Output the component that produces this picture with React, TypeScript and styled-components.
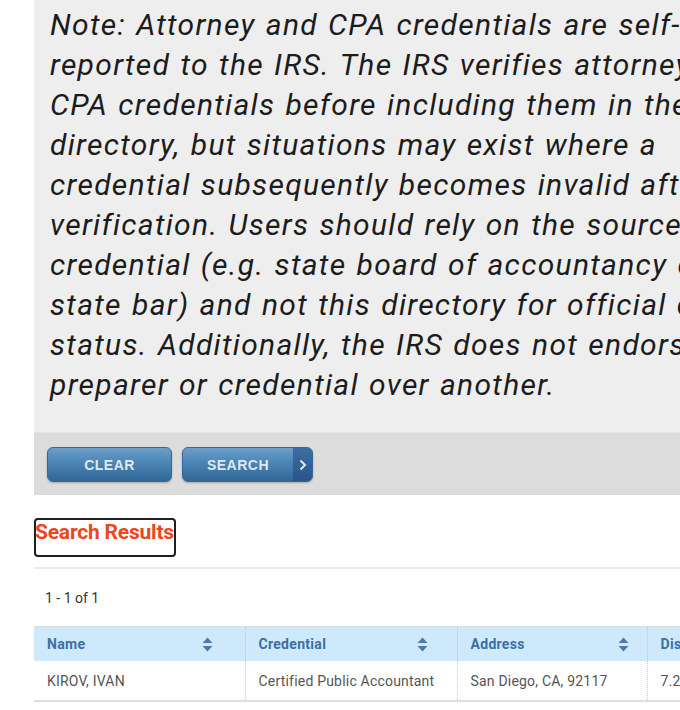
import React from 'react';
import styled, { createGlobalStyle } from 'styled-components';

const GlobalStyle = createGlobalStyle`
  html, body {
    margin: 0;
    padding: 0;
    overflow: hidden;
    background: #fff;
  }
  body {
    font-family: Roboto, "Liberation Sans", Arial, sans-serif;
  }
`;

const Page = styled.div`
  width: 1100px;
  padding-left: 34px;
`;

const NotePanel = styled.div`
  background: #eeeeee;
  padding: 5px 0 27px 16px;
`;

const NoteText = styled.p`
  margin: 0;
  white-space: nowrap;
  font-family: Roboto, "Liberation Sans", Arial, sans-serif;
  font-style: italic;
  font-size: 30px;
  line-height: 40px;
  letter-spacing: 1.3px;
  word-spacing: 1.5px;
  color: #1c1c1c;
`;

const ButtonBar = styled.div`
  background: #dcdcdc;
  display: flex;
  gap: 10px;
  padding: 14px 13px 13px;
  border-top: 1px solid #e4e4e4;
`;

const ActionButton = styled.button<{ $width: number }>`
  display: flex;
  align-items: stretch;
  width: ${(p) => p.$width}px;
  height: 35px;
  padding: 0;
  border: 1px solid #35679a;
  border-radius: 6px;
  overflow: hidden;
  background: linear-gradient(to bottom, #6c9fca 0%, #4c84b5 45%, #2f6799 100%);
  box-shadow: 0 1px 2px rgba(0, 0, 0, 0.25);
  cursor: pointer;
`;

const ButtonLabel = styled.span`
  flex: 1;
  display: flex;
  align-items: center;
  justify-content: center;
  font-family: "Liberation Sans", Arial, sans-serif;
  font-weight: bold;
  font-size: 14px;
  color: #dfe8f1;
  letter-spacing: 0.5px;
`;

const Chevron = styled.span`
  width: 19px;
  display: flex;
  align-items: center;
  justify-content: center;
  background: linear-gradient(to bottom, #3c6fa3 0%, #27558a 100%);
  color: #dfe8f1;
`;

const Results = styled.section`
  padding-top: 23px;
`;

const ResultsHeading = styled.h2`
  box-sizing: border-box;
  margin: 0;
  width: 142px;
  height: 39px;
  border: 2px solid #1f1f1f;
  border-radius: 4px;
  font-family: Roboto, "Liberation Sans", Arial, sans-serif;
  font-weight: bold;
  font-size: 21px;
  line-height: 24px;
  color: #e9481f;
  white-space: nowrap;
  text-indent: -1px;
  letter-spacing: -0.2px;
`;

const Divider = styled.div`
  margin-top: 10px;
  height: 2px;
  background: #ebebeb;
`;

const Count = styled.div`
  padding: 20px 0 0 11px;
  height: 37px;
  font-size: 14px;
  line-height: 18px;
  color: #333;
`;

const Table = styled.table`
  border-collapse: collapse;
  table-layout: fixed;
  width: 800px;
  font-family: Roboto, "Liberation Sans", Arial, sans-serif;
  font-size: 14px;
`;

const HeadCell = styled.th`
  background: #cde9fb;
  height: 34px;
  padding: 0 13px;
  text-align: left;
  font-weight: bold;
  letter-spacing: 0.3px;
  color: #3b6fa6;
  border-top: 1px solid #dcdcdc;
  border-left: 1px dotted #b9c9d6;
  &:first-child {
    border-left: none;
  }
`;

const HeadInner = styled.div<{ $iconGap: number }>`
  display: flex;
  align-items: center;
  justify-content: space-between;
  padding-right: ${(p) => p.$iconGap}px;
`;

const BodyCell = styled.td`
  height: 39px;
  padding: 0 13px;
  color: #555;
  letter-spacing: 0.2px;
  border-bottom: 2px solid #dedede;
  border-left: 1px dotted #c8c8c8;
  white-space: nowrap;
  overflow: hidden;
  &:first-child {
    border-left: none;
  }
`;

const SortIcon = () => (
  <svg width="11" height="15" viewBox="0 0 11 15" aria-hidden="true">
    <path d="M5.5 0.5 L10.5 6 L0.5 6 Z" fill="#4f7aa8" />
    <path d="M5.5 14.5 L10.5 9 L0.5 9 Z" fill="#4f7aa8" />
  </svg>
);

const noteLines = [
  'Note: Attorney and CPA credentials are self-',
  'reported to the IRS. The IRS verifies attorney and',
  'CPA credentials before including them in the',
  'directory, but situations may exist where a',
  'credential subsequently becomes invalid after',
  'verification. Users should rely on the source of the',
  'credential (e.g. state board of accountancy or',
  'state bar) and not this directory for official credential',
  'status. Additionally, the IRS does not endorse any one',
  'preparer or credential over another.',
];

const columns = [
  { label: 'Name', width: 211, gap: 19 },
  { label: 'Credential', width: 212, gap: 16 },
  { label: 'Address', width: 190, gap: 5 },
  { label: 'Distance', width: 187, gap: 10 },
];

const row = ['KIROV, IVAN', 'Certified Public Accountant', 'San Diego, CA, 92117', '7.2 mi'];

export default function App() {
  return (
    <>
      <GlobalStyle />
      <Page>
        <NotePanel>
          <NoteText>
            {noteLines.map((line, i) => (
              <React.Fragment key={i}>
                {line}
                {i < noteLines.length - 1 && <br />}
              </React.Fragment>
            ))}
          </NoteText>
        </NotePanel>
        <ButtonBar>
          <ActionButton $width={125}>
            <ButtonLabel>CLEAR</ButtonLabel>
          </ActionButton>
          <ActionButton $width={131}>
            <ButtonLabel>SEARCH</ButtonLabel>
            <Chevron>
              <svg width="8" height="12" viewBox="0 0 8 12" aria-hidden="true">
                <path d="M1.5 1.5 L6 6 L1.5 10.5" stroke="#dfe8f1" strokeWidth="2" fill="none" />
              </svg>
            </Chevron>
          </ActionButton>
        </ButtonBar>
        <Results>
          <ResultsHeading>Search Results</ResultsHeading>
          <Divider />
          <Count>1 - 1 of 1</Count>
          <Table>
            <colgroup>
              {columns.map((c) => (
                <col key={c.label} style={{ width: c.width }} />
              ))}
            </colgroup>
            <thead>
              <tr>
                {columns.map((c) => (
                  <HeadCell key={c.label}>
                    <HeadInner $iconGap={c.gap}>
                      <span>{c.label}</span>
                      <SortIcon />
                    </HeadInner>
                  </HeadCell>
                ))}
              </tr>
            </thead>
            <tbody>
              <tr>
                {row.map((v, i) => (
                  <BodyCell key={i}>{v}</BodyCell>
                ))}
              </tr>
            </tbody>
          </Table>
        </Results>
      </Page>
    </>
  );
}
